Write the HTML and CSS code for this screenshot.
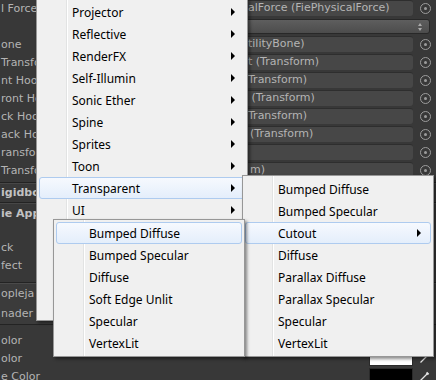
FILE: index.html
```html
<!DOCTYPE html>
<html lang="en">
<head>
    <meta charset="UTF-8">
    <title>Inspector - Shader menu</title>
    <link rel="stylesheet" href="styles.css">
</head>
<body>
    <div class="inspector">
        <div class="row"><span class="label">l Force</span><span class="field">alForce (FiePhysicalForce)</span><span class="pick"></span></div>
        <div class="row"><span class="label"></span><span class="popup"><span class="updown"></span></span></div>
        <div class="row"><span class="label">one</span><span class="field">tilityBone)</span><span class="pick"></span></div>
        <div class="row"><span class="label">Transfo</span><span class="field">t (Transform)</span><span class="pick"></span></div>
        <div class="row"><span class="label">nt Hoo</span><span class="field">Transform)</span><span class="pick"></span></div>
        <div class="row"><span class="label">ront Ho</span><span class="field">&nbsp;(Transform)</span><span class="pick"></span></div>
        <div class="row"><span class="label">ck Hoo</span><span class="field">Transform)</span><span class="pick"></span></div>
        <div class="row"><span class="label">ack Ho</span><span class="field shift">(Transform)</span><span class="pick"></span></div>
        <div class="row"><span class="label">ransfor</span><span class="field"></span><span class="pick"></span></div>
        <div class="row"><span class="label">Transfo</span><span class="field shift">m)</span><span class="pick"></span></div>

        <div class="component-header">igidbody</div>
        <div class="component-header">ie Apple</div>
        <div class="component-body">
            <div class="row"><span class="label">ck</span></div>
            <div class="row"><span class="label">fect</span></div>
        </div>

        <div class="material-header">
            <div class="material-line">opleja</div>
            <div class="material-line">nader</div>
        </div>
        <div class="material-body">
            <div class="row"><span class="label wide">olor</span><span class="swatch white"></span><span class="dropper"><svg width="11" height="11" viewBox="0 0 11 11"><path d="M1.5 9.5 L8 3" stroke="#e6e6e6" stroke-width="1.3" fill="none"/><path d="M7.5 1.5 L9.5 3.5" stroke="#e6e6e6" stroke-width="2" fill="none"/></svg></span></div>
            <div class="row"><span class="label wide">olor</span><span class="swatch white"></span><span class="dropper"><svg width="11" height="11" viewBox="0 0 11 11"><path d="M1.5 9.5 L8 3" stroke="#e6e6e6" stroke-width="1.3" fill="none"/><path d="M7.5 1.5 L9.5 3.5" stroke="#e6e6e6" stroke-width="2" fill="none"/></svg></span></div>
            <div class="row"><span class="label wide">e Color</span><span class="swatch black"></span><span class="dropper"><svg width="11" height="11" viewBox="0 0 11 11"><path d="M1.5 9.5 L8 3" stroke="#e6e6e6" stroke-width="1.3" fill="none"/><path d="M7.5 1.5 L9.5 3.5" stroke="#e6e6e6" stroke-width="2" fill="none"/></svg></span></div>
        </div>
    </div>

    <!-- shader menu, first level (lower entries sit behind the open submenu) -->
    <div class="menu menu-main">
        <div class="item">Projector<i class="arrow"></i></div>
        <div class="item">Reflective<i class="arrow"></i></div>
        <div class="item">RenderFX<i class="arrow"></i></div>
        <div class="item">Self-Illumin<i class="arrow"></i></div>
        <div class="item">Sonic Ether<i class="arrow"></i></div>
        <div class="item">Spine<i class="arrow"></i></div>
        <div class="item">Sprites<i class="arrow"></i></div>
        <div class="item">Toon<i class="arrow"></i></div>
        <div class="item active">Transparent<i class="arrow"></i></div>
        <div class="item">UI<i class="arrow"></i></div>
    </div>

    <!-- Transparent submenu -->
    <div class="menu menu-transparent">
        <div class="item">Bumped Diffuse</div>
        <div class="item">Bumped Specular</div>
        <div class="item active">Cutout<i class="arrow"></i></div>
        <div class="item">Diffuse</div>
        <div class="item">Parallax Diffuse</div>
        <div class="item">Parallax Specular</div>
        <div class="item">Specular</div>
        <div class="item">VertexLit</div>
    </div>

    <!-- Cutout submenu -->
    <div class="menu menu-cutout">
        <div class="item active">Bumped Diffuse</div>
        <div class="item">Bumped Specular</div>
        <div class="item">Diffuse</div>
        <div class="item">Soft Edge Unlit</div>
        <div class="item">Specular</div>
        <div class="item">VertexLit</div>
    </div>
</body>
</html>
```

FILE: styles.css
```css
:root {
    --editor-bg: #383838;
    --label-color: #b4b4b4;
    --field-bg: #474747;
    --menu-bg: #f0f0f0;
    --menu-border: #979797;
}
* { box-sizing: border-box; margin: 0; padding: 0; }
body {
    background-color: var(--editor-bg);
    color: var(--label-color);
    font-family: 'DejaVu Sans', sans-serif;
    font-size: 11px;
    width: 436px;
    height: 380px;
    overflow: hidden;
    position: relative;
}

/* inspector underneath */
.inspector { margin-top: -1px; }
.row { display: flex; align-items: center; height: 18px; }
.label { width: 236px; padding-left: 1px; white-space: nowrap; overflow: hidden; }
.label.wide { width: 369px; }
.field {
    width: 177px; height: 16px; padding-left: 12px;
    background-color: var(--field-bg);
    border-top: 1px solid #2e2e2e;
    border-radius: 3px;
    line-height: 14px; white-space: pre; overflow: hidden;
}
.field.shift { padding-left: 14px; }
.pick {
    width: 11px; height: 11px; margin-left: 7px;
    border: 1px solid #9c9c9c; border-radius: 50%;
    display: flex; align-items: center; justify-content: center;
}
.pick::after { content: ""; width: 3px; height: 3px; border-radius: 50%; background: #9c9c9c; }
.popup {
    width: 194px; height: 15px; position: relative;
    background-image: linear-gradient(#5e5e5e, #4c4c4c);
    border: 1px solid #282828; border-radius: 3px;
}
.updown { position: absolute; right: 6px; top: 3px; width: 5px; height: 8px; }
.updown::before, .updown::after {
    content: ""; position: absolute; left: 0;
    border-left: 2.5px solid transparent; border-right: 2.5px solid transparent;
}
.updown::before { top: 0; border-bottom: 3px solid #aaa; }
.updown::after { bottom: 0; border-top: 3px solid #aaa; }

.component-header {
    height: 20px; line-height: 19px; padding-left: 1px;
    margin-top: 3px;
    font-weight: bold; color: #c2c2c2;
    border-top: 1px solid #232323;
    box-shadow: inset 0 1px 0 #474747;
}
.component-header + .component-header { margin-top: 0; height: 22px; line-height: 22px; }
.component-body { padding-top: 14px; padding-bottom: 8px; }
.material-header {
    height: 43px; padding: 2px 0 0 1px;
    border-top: 1px solid #232323;
    border-bottom: 1px solid #232323;
    box-shadow: inset 0 1px 0 #4a4a4a;
    background-color: #3b3b3b;
}
.material-line { height: 20px; line-height: 18px; }
.material-body { padding-top: 6px; }
.swatch { width: 44px; height: 16px; border: 1px solid #2a2a2a; }
.swatch.white { background: #fff; }
.swatch.black { background: #000; }
.dropper { margin-left: 6px; display: flex; }

/* context menus */
.menu {
    position: absolute;
    font-family: 'Noto Sans', sans-serif;
    font-size: 12px;
    color: #000;
    border: 1px solid var(--menu-border);
    padding: 2px;
    background-color: var(--menu-bg);
    background-image: linear-gradient(to right, transparent 29px, #e2e3e3 29px, #e2e3e3 30px, #fff 30px, #fff 31px, transparent 31px);
    box-shadow: 2px 2px 3px rgba(0, 0, 0, 0.45);
}
.menu-main { left: 36px; top: -2px; width: 212px; height: 323px; }
.menu-transparent { left: 242px; top: 175px; width: 192px; }
.menu-cutout { left: 53px; top: 219px; width: 192px; }
.item {
    height: 22px; display: flex; align-items: center;
    padding: 0 9px 0 32px; white-space: nowrap;
    border: 1px solid transparent; border-radius: 3px;
}
.item.active {
    border-color: #aecbef;
    background-image: linear-gradient(#f6f9fe, #e4eefb);
}
.arrow {
    margin-left: auto;
    border-left: 4px solid #000;
    border-top: 4px solid transparent;
    border-bottom: 4px solid transparent;
}
```
